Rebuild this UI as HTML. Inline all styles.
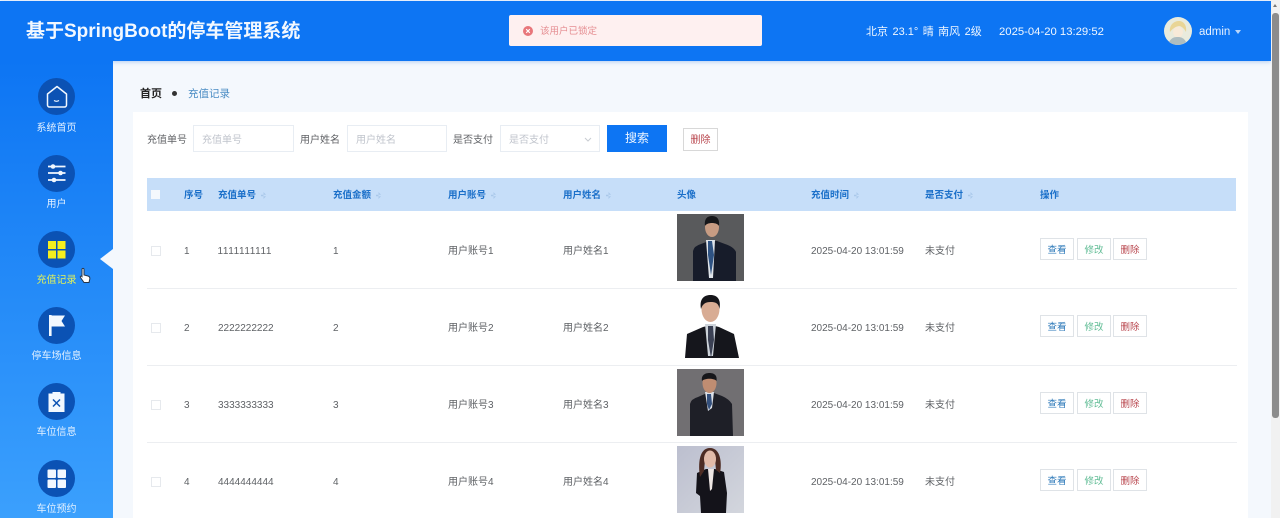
<!DOCTYPE html>
<html lang="zh">
<head>
<meta charset="utf-8">
<title>基于SpringBoot的停车管理系统</title>
<style>
html,body{margin:0;padding:0;width:1280px;height:518px;overflow:hidden;background:#f4f8fd;font-family:"Liberation Sans","Noto Sans CJK SC",sans-serif}
.a{position:absolute;white-space:nowrap}
#top{position:absolute;left:0;top:1px;width:1271px;height:60px;background:#0d75f3;box-shadow:0 1px 4px rgba(60,130,220,.35)}
#side{position:absolute;left:0;top:61px;width:113px;height:457px;background:linear-gradient(180deg,#0d75f3 0%,#3ba0fd 100%)}
#card{position:absolute;left:133px;top:112px;width:1115px;height:406px;background:#fff}
#sb{position:absolute;left:1271px;top:0;width:9px;height:518px;background:#f1f1f1}
#sb i{position:absolute;left:1px;top:13px;width:7px;height:405px;background:#8c8c8c;border-radius:3px}
.ci{position:absolute;left:38px;width:37px;height:37px;border-radius:50%;background:#0b52b4}
.ci svg{display:block;width:37px;height:37px}
.sl{position:absolute;left:0;width:113px;text-align:center;font-size:10px;line-height:14px;color:#e2f0ff;margin-top:1px}
.in{position:absolute;top:125px;height:25px;background:#fff;border:1px solid #e8edf3;box-sizing:content-box;font-size:10px;line-height:30px;color:#c0c4cc;padding-left:8px;overflow:hidden}
.lb{position:absolute;top:134px;font-size:10px;line-height:14px;color:#606266}
.th{position:absolute;top:189px;font-size:9.5px;line-height:14px;color:#1a6fc9;font-weight:bold;white-space:nowrap}
.th b{display:inline-block;width:5px;height:7px;margin-left:5px;background:#a9c8ea;vertical-align:-1px;clip-path:polygon(50% 0,100% 40%,0 40%,0 60%,100% 60%,50% 100%)}
.td{position:absolute;font-size:10px;line-height:14px;color:#5f6266;white-space:nowrap;margin-top:1px}
.hr{position:absolute;left:147px;width:1090px;height:1px;background:#eceef1}
.cb{position:absolute;left:151px;width:8px;height:8px;border:1px solid #e6e9ed;background:#fff}
.btn{position:absolute;width:32px;height:20px;border:1px solid #dfe3e7;background:#fff;font-size:9.5px;line-height:23px;text-align:center;overflow:hidden}
.v{color:#2a77b8}.e{color:#62bd96}.d{color:#b8444c}
.ph{position:absolute;left:677px;width:67px;height:67px;display:block}
</style>
</head>
<body>
<div id="top"></div>
<div class="a" style="left:26px;top:18px;font-size:19px;line-height:28px;font-weight:bold;color:#f2f8ff">基于SpringBoot的停车管理系统</div>

<div class="a" style="left:509px;top:15px;width:253px;height:31px;background:#fef0f0;border-radius:2px"></div>
<svg class="a" style="left:523px;top:26px" width="10" height="10" viewBox="0 0 10 10"><circle cx="5" cy="5" r="5" fill="#e8767b"/><path d="M3.2 3.2 6.8 6.8M6.8 3.2 3.2 6.8" stroke="#fff" stroke-width="1.1"/></svg>
<div class="a" style="left:540px;top:25px;font-size:9.5px;line-height:14px;color:#e58e92">该用户已锁定</div>

<div class="a" style="left:866px;top:25px;font-size:11px;line-height:14px;color:#f0f7ff;word-spacing:1.4px">北京 23.1° 晴 南风 2级</div>
<div class="a" style="left:999px;top:25px;font-size:11.3px;line-height:14px;color:#f0f7ff">2025-04-20 13:29:52</div>
<svg class="a" style="left:1164px;top:17px" width="28" height="28" viewBox="0 0 28 28"><circle cx="14" cy="14" r="14" fill="#e9ebdd"/><path d="M6 15c-1-7 4-11 9-11s8 5 7 11c-2-4-5-6-7-6-4 1-7 3-9 6z" fill="#e9d596"/><ellipse cx="14" cy="15" rx="5" ry="5.500" fill="#f8ead8"/><path d="M5 25c3-5 6-5 9-5s6 1 8 5c-5 4-12 4-17 0z" fill="#aebdc0"/></svg>
<div class="a" style="left:1199px;top:25px;font-size:11.5px;line-height:14px;color:#e6f1ff">admin</div>
<div class="a" style="left:1235px;top:29.500px;width:0;height:0;border:3.500px solid transparent;border-top:4px solid #b9d6fb"></div>

<div id="side"></div>
<div class="ci" style="top:78px"><svg viewBox="0 0 37 37"><path d="M19 8.500 28.500 16v11a2 2 0 0 1-2 2h-15a2 2 0 0 1-2-2V16z" fill="none" stroke="#f2f8ff" stroke-width="1.500" stroke-linejoin="round"/><path d="M16 22.500q2.500 1.600 5 0" fill="none" stroke="#f2f8ff" stroke-width="1.200"/></svg></div>
<div class="sl" style="top:121px">系统首页</div>
<div class="ci" style="top:155px"><svg viewBox="0 0 37 37"><path d="M10 11.500h17.500M10 18h17.500M10 25h17.500" stroke="#f2f8ff" stroke-width="1.800"/><circle cx="15" cy="11.500" r="2.300" fill="#f2f8ff"/><circle cx="22.500" cy="18" r="2.300" fill="#f2f8ff"/><circle cx="16" cy="25" r="2.300" fill="#f2f8ff"/></svg></div>
<div class="sl" style="top:197px">用户</div>
<div class="ci" style="top:231px"><svg viewBox="0 0 37 37"><g fill="#f5ee1e"><rect x="10" y="10" width="8" height="8"/><rect x="19.500" y="10" width="8" height="8"/><rect x="10" y="19.500" width="8" height="8"/><rect x="19.500" y="19.500" width="8" height="8"/></g></svg></div>
<div class="sl" style="top:273px;color:#dff05a">充值记录</div>
<svg class="a" style="left:79px;top:267px" width="12" height="18" viewBox="0 0 12 18"><path d="M3 2.500c0-1.500 2-1.500 2 0V8l4 1c1.500.5 2 1.500 1.800 3L10 15.500H5L1.500 10.500c-.6-1 .6-2 1.500-1z" fill="#fff" stroke="#26354a" stroke-width="1"/></svg>
<div class="ci" style="top:307px"><svg viewBox="0 0 37 37"><rect x="11" y="8" width="2.600" height="21" fill="#f2f8ff"/><path d="M13 8.500h14l-3.500 5.500 3.500 5.500H13z" fill="#f2f8ff"/></svg></div>
<div class="sl" style="top:349px">停车场信息</div>
<div class="ci" style="top:383px"><svg viewBox="0 0 37 37"><path d="M10.500 10.500h4V9h8v1.500h4V29h-16z" fill="#f2f8ff"/><path d="M15 16.500 22 23.500M22 16.500 15 23.500" stroke="#0b52b4" stroke-width="1.500"/></svg></div>
<div class="sl" style="top:425px">车位信息</div>
<div class="ci" style="top:460px"><svg viewBox="0 0 37 37"><g fill="#f2f8ff"><rect x="9.500" y="9.500" width="8.500" height="8.500" rx="1"/><rect x="19.500" y="9.500" width="8.500" height="8.500" rx="1"/><rect x="9.500" y="19.500" width="8.500" height="8.500" rx="1"/><rect x="19.500" y="19.500" width="8.500" height="8.500" rx="1"/></g></svg></div>
<div class="sl" style="top:502px">车位预约</div>
<div class="a" style="left:100px;top:249px;width:0;height:0;border:10px solid transparent;border-left:0;border-right:13px solid #f4f8fd"></div>

<div class="a" style="left:140px;top:87px;font-size:11px;line-height:14px;font-weight:bold;color:#222">首页</div>
<div class="a" style="left:172px;top:91px;width:5px;height:5px;border-radius:50%;background:#333"></div>
<div class="a" style="left:188px;top:87px;font-size:10.5px;line-height:14px;color:#4a8cc4">充值记录</div>

<div id="card"></div>
<div class="lb" style="left:147px">充值单号</div>
<div class="in" style="left:193px;width:91px">充值单号</div>
<div class="lb" style="left:300px">用户姓名</div>
<div class="in" style="left:347px;width:90px">用户姓名</div>
<div class="lb" style="left:453px">是否支付</div>
<div class="in" style="left:500px;width:90px">是否支付</div>
<svg class="a" style="left:584px;top:137px" width="8" height="5" viewBox="0 0 8 5"><path d="M1 1 4 4 7 1" fill="none" stroke="#c8ccd2" stroke-width="1"/></svg>
<div class="a" style="left:607px;top:125px;width:60px;height:27px;background:#0d75f3;color:#eef6ff;font-size:12px;line-height:27px;text-align:center">搜索</div>
<div class="a" style="left:683px;top:128px;width:33px;height:21px;border:1px solid #d8d8d8;background:#fff;color:#b8444c;font-size:10px;line-height:23px;text-align:center">删除</div>

<div class="a" style="left:147px;top:178px;width:1089px;height:33px;background:#c6def9"></div>
<div class="a" style="left:151px;top:190px;width:9px;height:9px;background:#f4f8fd"></div>
<div class="th" style="left:184px">序号</div>
<div class="th" style="left:218px">充值单号<b></b></div>
<div class="th" style="left:333px">充值金额<b></b></div>
<div class="th" style="left:448px">用户账号<b></b></div>
<div class="th" style="left:563px">用户姓名<b></b></div>
<div class="th" style="left:677px">头像</div>
<div class="th" style="left:811px">充值时间<b></b></div>
<div class="th" style="left:925px">是否支付<b></b></div>
<div class="th" style="left:1040px">操作</div>

<!-- row 1 -->
<div class="cb" style="top:246px"></div>
<div class="td" style="left:184px;top:244px">1</div>
<div class="td" style="left:217.500px;top:244px;letter-spacing:.55px">1111111111</div>
<div class="td" style="left:333px;top:244px">1</div>
<div class="td" style="left:448px;top:244px">用户账号1</div>
<div class="td" style="left:563px;top:244px">用户姓名1</div>
<svg class="ph" style="top:214px" viewBox="0 0 67 67"><rect width="67" height="67" fill="#595a5c"/><path d="M16 67V37q1-5 8-7l8-3h8l8 3q9 3 11 8v29z" fill="#171c2a"/><path d="M29 26h9l-2 38h-4z" fill="#dfe4ea"/><path d="M31 27h4l2 14-3 20-3-20z" fill="#2f5383"/><ellipse cx="35" cy="13" rx="7" ry="10" fill="#c79c83"/><path d="M28 12c-1-8 3-10 7-10s8 2 7 10c-2-4-12-4-14 0z" fill="#16171a"/></svg>
<div class="td" style="left:811px;top:244px">2025-04-20 13:01:59</div>
<div class="td" style="left:925px;top:244px">未支付</div>
<div class="btn v" style="left:1040px;top:238px">查看</div>
<div class="btn e" style="left:1077px;top:238px">修改</div>
<div class="btn d" style="left:1113px;top:238px">删除</div>
<div class="hr" style="top:288px"></div>

<!-- row 2 -->
<div class="cb" style="top:323px"></div>
<div class="td" style="left:184px;top:321px">2</div>
<div class="td" style="left:218px;top:321px">2222222222</div>
<div class="td" style="left:333px;top:321px">2</div>
<div class="td" style="left:448px;top:321px">用户账号2</div>
<div class="td" style="left:563px;top:321px">用户姓名2</div>
<svg class="ph" style="top:291px" viewBox="0 0 67 67"><rect width="67" height="67" fill="#fff"/><path d="M8 67l2-24 16-7 8-2 8 2 15 7 5 24z" fill="#15161c"/><path d="M28 33h11l-3 32h-5z" fill="#cdd3da"/><path d="M31 35h5l1 14-3 18-3-18z" fill="#3b4154"/><ellipse cx="33.500" cy="18" rx="9" ry="13" fill="#d8ac94"/><path d="M24 18c-2-11 4-14 9.500-14s11 3 9 14c-1-6-4-7-9-7s-8 2-9.500 7z" fill="#15151a"/></svg>
<div class="td" style="left:811px;top:321px">2025-04-20 13:01:59</div>
<div class="td" style="left:925px;top:321px">未支付</div>
<div class="btn v" style="left:1040px;top:315px">查看</div>
<div class="btn e" style="left:1077px;top:315px">修改</div>
<div class="btn d" style="left:1113px;top:315px">删除</div>
<div class="hr" style="top:365px"></div>

<!-- row 3 -->
<div class="cb" style="top:400px"></div>
<div class="td" style="left:184px;top:398px">3</div>
<div class="td" style="left:218px;top:398px">3333333333</div>
<div class="td" style="left:333px;top:398px">3</div>
<div class="td" style="left:448px;top:398px">用户账号3</div>
<div class="td" style="left:563px;top:398px">用户姓名3</div>
<svg class="ph" style="top:369px" viewBox="0 0 67 67"><rect width="67" height="67" fill="#716f72"/><path d="M13 67V35q1-5 8-7l9-4h7l8 3q7 3 10 8l1 32z" fill="#1e1f27"/><path d="M28 23h9l-2 16-4 3z" fill="#dce1e8"/><path d="M30 25h4l1 10-3 6-2-6z" fill="#34507d"/><ellipse cx="32.500" cy="14" rx="7" ry="10" fill="#bf8d72"/><path d="M25 12c-1-6 3-8 7.500-8s8 2 7 8c-2-3-12-3-14.500 0z" fill="#16161a"/></svg>
<div class="td" style="left:811px;top:398px">2025-04-20 13:01:59</div>
<div class="td" style="left:925px;top:398px">未支付</div>
<div class="btn v" style="left:1040px;top:392px">查看</div>
<div class="btn e" style="left:1077px;top:392px">修改</div>
<div class="btn d" style="left:1113px;top:392px">删除</div>
<div class="hr" style="top:442px"></div>

<!-- row 4 -->
<div class="cb" style="top:477px"></div>
<div class="td" style="left:184px;top:475px">4</div>
<div class="td" style="left:218px;top:475px">4444444444</div>
<div class="td" style="left:333px;top:475px">4</div>
<div class="td" style="left:448px;top:475px">用户账号4</div>
<div class="td" style="left:563px;top:475px">用户姓名4</div>
<svg class="ph" style="top:446px" viewBox="0 0 67 67"><defs><linearGradient id="g4" x1="0" y1="0" x2="1" y2="1"><stop offset="0" stop-color="#bcbfcf"/><stop offset="1" stop-color="#d3d6dd"/></linearGradient></defs><rect width="67" height="67" fill="url(#g4)"/><path d="M19 47l1-20 9-4h9l9 3 3 21-1 20H24l-1-17z" fill="#14131a"/><path d="M31 23h6l-2 20-2 2z" fill="#eee6e4"/><path d="M23 31c-2-13-1-29 10-29s12 16 10 25l-4-3-1-10H28l-1 11z" fill="#4d2c24"/><ellipse cx="33" cy="13" rx="6" ry="8.500" fill="#e2bba9"/></svg>
<div class="td" style="left:811px;top:475px">2025-04-20 13:01:59</div>
<div class="td" style="left:925px;top:475px">未支付</div>
<div class="btn v" style="left:1040px;top:469px">查看</div>
<div class="btn e" style="left:1077px;top:469px">修改</div>
<div class="btn d" style="left:1113px;top:469px">删除</div>

<div id="sb"><i></i></div>
<div class="a" style="left:1273px;top:4px;width:0;height:0;border:2.500px solid transparent;border-bottom:3px solid #777;border-top:0"></div>
</body>
</html>
